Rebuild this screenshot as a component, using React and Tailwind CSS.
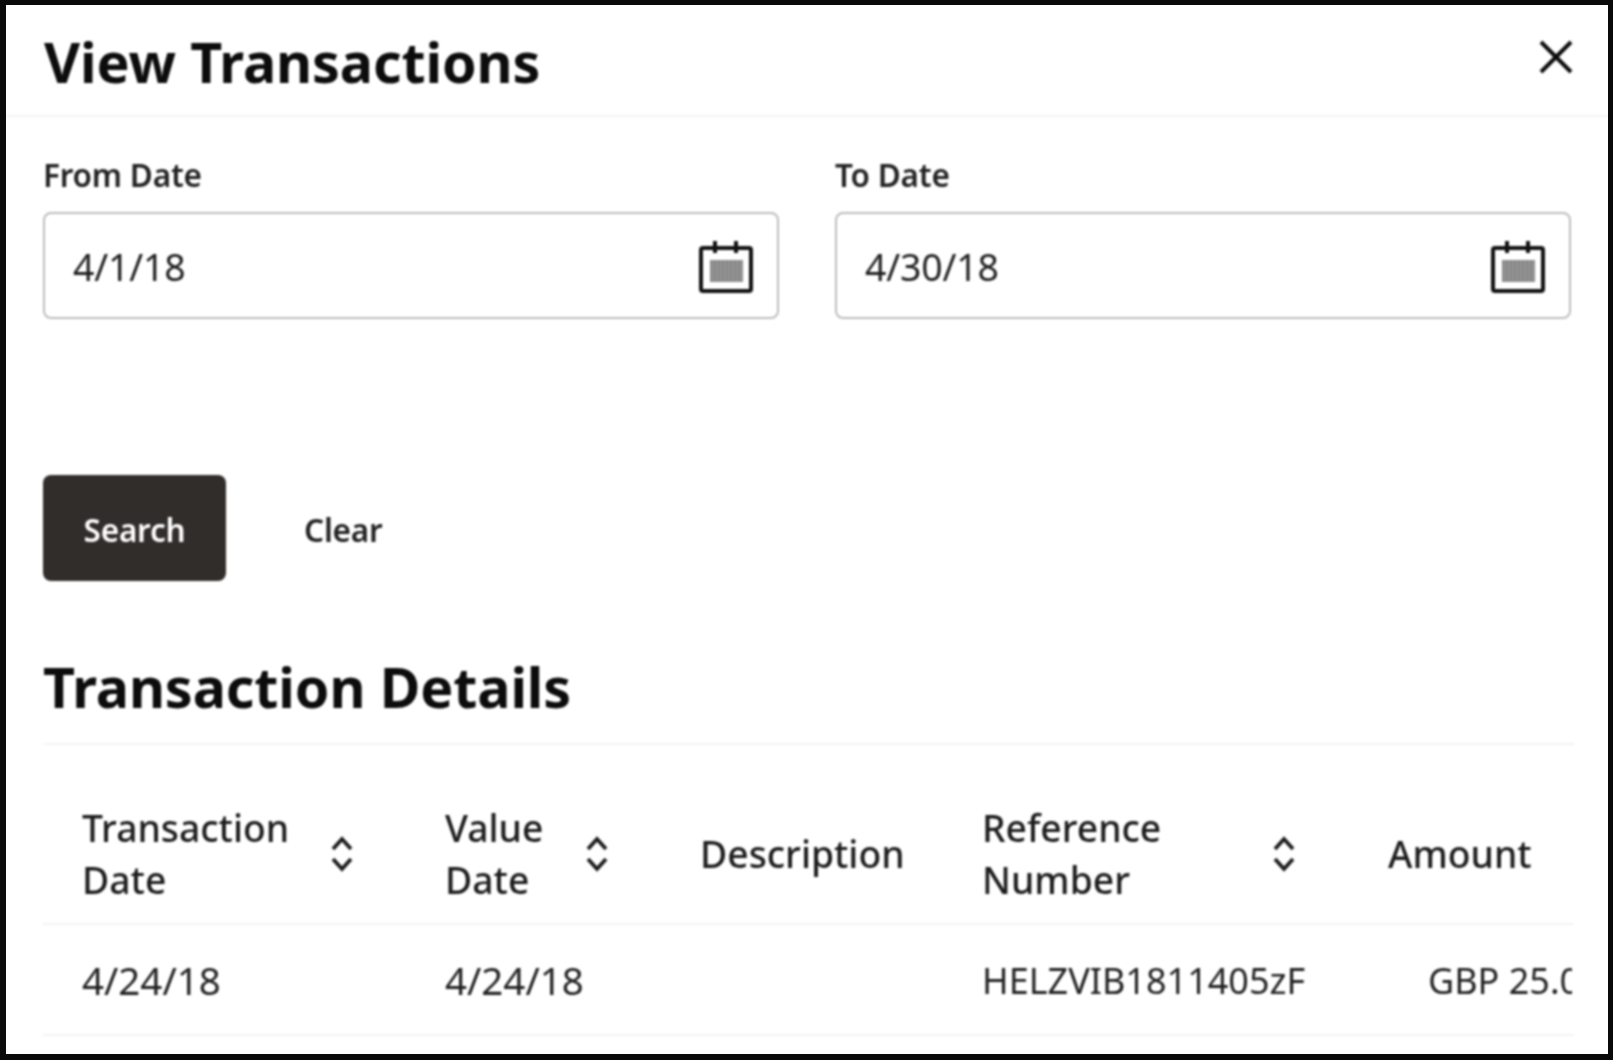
import React from "react";

function CalendarIcon() {
  return (
    <svg width="54" height="54" viewBox="0 0 54 54" fill="none" className="mt-[3px] -ml-[2px] mr-[1px] shrink-0">
      <rect x="2" y="8" width="50" height="43" rx="2" stroke="#111" strokeWidth="4" />
      <path d="M16 1v12M37 1v12" stroke="#111" strokeWidth="4" />
      <rect x="11" y="20" width="33" height="22" fill="#858585" />
      <path d="M14 20v22M18 20v22M22 20v22M26 20v22M30 20v22M34 20v22M38 20v22M42 20v22" stroke="#a8a8a8" strokeWidth="1" />
    </svg>
  );
}

function SortIcon() {
  return (
    <svg width="26" height="36" viewBox="0 0 26 36" fill="none" className="shrink-0">
      <path d="M4 13 13 3l9 10M4 23l9 10 9-10" stroke="#1c1c1c" strokeWidth="3.8" />
    </svg>
  );
}

function DateField({ label, value }) {
  return (
    <div className="flex w-[736px] flex-col">
      <label className="h-[57px] text-[31.5px] leading-[40px] font-semibold tracking-[-0.2px] text-[#222]">{label}</label>
      <div className="flex h-[107px] items-center justify-between rounded-[8px] border-2 border-[#bdbdbd] pl-[28px] pr-[23px]">
        <span className="mt-[4px] text-[37.5px] tracking-[-0.2px] text-[#1f1f1f]">{value}</span>
        <CalendarIcon />
      </div>
    </div>
  );
}

const cell = "flex items-center pl-[39px]";

export default function App() {
  return (
    <div className="h-[1060px] w-[1613px] overflow-hidden border-t-[5px] border-r-[5px] border-b-[6px] border-l-[6px] border-[#0a0a0a] bg-white font-['Noto_Sans','Open_Sans',sans-serif]">
      <div className="h-full w-full blur-[1px]">
        <header className="flex h-[112px] items-center justify-between border-b-2 border-[#f3f3f3] pr-[34px] pl-[38px]">
          <h1 className="mt-[3px] text-[55.5px] leading-[60px] font-bold tracking-[-0.1px] text-[#0c0c0c]">View Transactions</h1>
          <svg width="36" height="36" viewBox="0 0 36 36" fill="none" className="mb-[6px]">
            <path d="M3 3l30 30M33 3 3 33" stroke="#0c0c0c" strokeWidth="4" />
          </svg>
        </header>

        <div className="flex gap-[56px] pt-[38px] pl-[37px]">
          <DateField label="From Date" value="4/1/18" />
          <DateField label="To Date" value="4/30/18" />
        </div>

        <div className="mt-[156px] flex items-center pl-[37px]">
          <button className="h-[106px] w-[183px] rounded-[8px] bg-[#312d2a] pt-[4px] text-[31.5px] font-semibold tracking-[-0.2px] text-white">Search</button>
          <button className="ml-[78px] pt-[4px] text-[31.5px] font-semibold tracking-[-0.2px] text-[#222]">Clear</button>
        </div>

        <div className="mx-[37px] mt-[65px] w-[1531px]">
          <h2 className="h-[99px] border-b-2 border-[#f3f3f3] pt-[7px] text-[55.5px] leading-[68px] font-bold tracking-[-0.1px] text-[#0c0c0c]">Transaction Details</h2>

          <div className="mt-[40px] overflow-hidden">
            <div className="grid h-[140px] grid-cols-[363px_255px_282px_406px_223px] border-b-2 border-[#f3f3f3] text-[37.3px] leading-[52px] font-medium text-[#1c1c1c]">
              <div className={`${cell} gap-[40px]`}>
                <span>Transaction<br />Date</span>
                <SortIcon />
              </div>
              <div className={`${cell} gap-[41px]`}>
                <span>Value<br />Date</span>
                <SortIcon />
              </div>
              <div className={cell}>Description</div>
              <div className={`${cell} justify-between pr-[52px]`}>
                <span>Reference<br />Number</span>
                <SortIcon />
              </div>
              <div className={cell}>Amount</div>
            </div>
            <div className="grid h-[111px] grid-cols-[363px_255px_282px_406px_223px] border-b-2 border-[#f3f3f3] text-[36px] text-[#222]">
              <div className={`${cell} pt-[3px] text-[38.5px]`}>4/24/18</div>
              <div className={`${cell} pt-[3px] text-[38.5px]`}>4/24/18</div>
              <div className={cell}></div>
              <div className={`${cell} pt-[3px]`}>HELZVIB1811405zF</div>
              <div className="flex items-center overflow-hidden pt-[3px] pl-[79px] whitespace-nowrap">GBP 25.00</div>
            </div>
          </div>
        </div>
      </div>
    </div>
  );
}
